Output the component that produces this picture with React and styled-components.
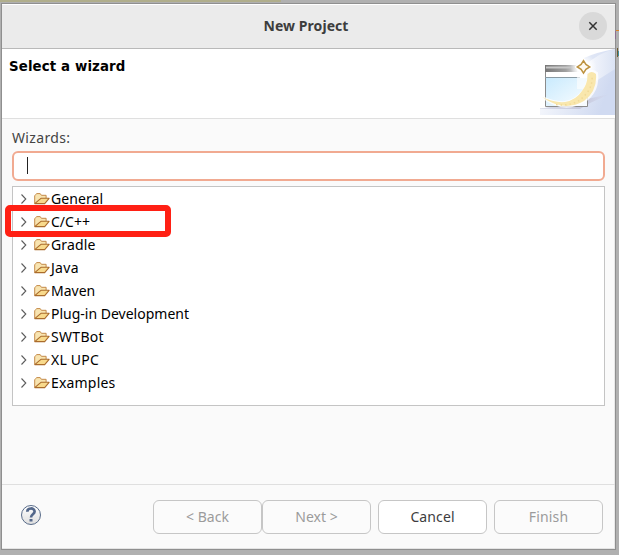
import React from "react";
import styled, { createGlobalStyle } from "styled-components";

const GlobalStyle = createGlobalStyle`
  * { box-sizing: border-box; }
  body { margin: 0; overflow: hidden; font-family: "Noto Sans", "Open Sans", sans-serif; }
`;

const Desktop = styled.div`
  position: relative;
  width: 619px;
  height: 555px;
  padding: 3px 3px 5px 1px;
  background: linear-gradient(#b0ae8c, #b0ae8c) 0 0 / 281px 2px no-repeat, #b0b0b0;
`;

const Dialog = styled.main`
  display: flex;
  flex-direction: column;
  width: 615px;
  height: 547px;
  border: 1px solid #8f8f8f;
  background: #fafafa;
  box-shadow: inset 0 -1px #e4e4e4, inset -1px 0 #e8e8e8;
`;

const TitleBar = styled.header`
  display: grid;
  grid-template-columns: 28px 1fr 28px;
  align-items: center;
  flex: 0 0 45px;
  padding: 0 8px 1px;
  border-top: 1px solid #fff;
  border-bottom: 1px solid #b9b9b9;
  background: #ebebeb;
`;

const Title = styled.h1`
  margin: 0;
  padding-right: 5px;
  text-align: center;
  color: #3d3d3d;
  font-size: 14px;
  font-weight: 700;
  line-height: 20px;
  letter-spacing: ${(p) => p.$tracking}px;
`;

const CloseButton = styled.button`
  display: grid;
  place-items: center;
  width: 28px;
  height: 28px;
  padding: 0;
  border: 0;
  border-radius: 50%;
  background: #d9d9d9;
`;

const Banner = styled.section`
  display: flex;
  justify-content: space-between;
  flex: 0 0 70px;
  padding-left: 7px;
  border-bottom: 1px solid #dfdfdf;
  background: #fff;
`;

const BannerTitle = styled.h2`
  margin: 9px 0 0;
  color: #000;
  font: 700 13.33px/18px "DejaVu Sans", sans-serif;
  letter-spacing: 0.13px;
`;

const Content = styled.section`
  display: flex;
  flex-direction: column;
  flex: 1;
  padding: 9px 9px 0 10px;
`;

const FieldLabel = styled.label`
  height: 23px;
  color: #444;
  font-size: 14px;
  line-height: 20px;
  letter-spacing: ${(p) => p.$tracking}px;
`;

const FilterField = styled.div`
  display: flex;
  align-items: center;
  flex: 0 0 30px;
  width: 593px;
  padding: 0 0 1px 13px;
  border: 2px solid #f1aa91;
  border-radius: 6px;
  background: #fff;
`;

const Caret = styled.span`
  width: 1px;
  height: 17px;
  background: #222;
`;

const Tree = styled.ul`
  width: 593px;
  height: 220px;
  margin: 5px 0 0;
  padding: 0;
  border: 1px solid #c4c4c4;
  background: #fff;
  list-style: none;
`;

const TreeRow = styled.li`
  display: flex;
  align-items: center;
  height: 23px;
  padding-left: 7px;
`;

const RowLabel = styled.span`
  margin-left: 1px;
  color: #000;
  font-size: 14px;
  line-height: 20px;
  letter-spacing: ${(p) => p.$tracking}px;
  white-space: nowrap;
`;

const Footer = styled.footer`
  display: flex;
  flex: 0 0 65px;
  justify-content: space-between;
  padding: 15px 12px 0 18px;
  border-top: 1px solid #dfdfdf;
`;

const Help = styled.div`
  padding-top: 4px;
`;

const ButtonRow = styled.div`
  display: flex;
  gap: 7px;
`;

const ButtonPair = styled.div`
  display: flex;
`;

const ActionButton = styled.button`
  width: 109px;
  height: 34px;
  padding: 0 0 1px;
  border: 1px solid #c6c6c6;
  border-radius: 6px;
  background: ${(p) => (p.disabled ? "#fbfbfb" : "#fff")};
  color: ${(p) => (p.disabled ? "#9b9b9b" : "#3d3d3d")};
  font: 14px/20px "Noto Sans", sans-serif;
  letter-spacing: ${(p) => p.$tracking}px;
`;

const Highlight = styled.div`
  position: absolute;
  left: 5px;
  top: 205px;
  width: 166px;
  height: 32px;
  border: 6px solid #ff2014;
  border-radius: 5px;
`;

const EdgeMark = styled.span`
  position: absolute;
  left: ${(p) => p.$left}px;
  top: ${(p) => p.$top}px;
  width: ${(p) => p.$width}px;
  height: ${(p) => p.$height}px;
  background: ${(p) => p.$color};
`;

const Chevron = () => (
  <svg width="8" height="12" viewBox="0 0 8 12" fill="none">
    <path d="M1.5 1.5 5.8 6 1.5 10.5" stroke="#5c5c5c" strokeWidth="1.1" />
  </svg>
);

const FolderSvg = styled.svg`
  margin-left: 6px;
`;

const Folder = () => (
  <FolderSvg width="16" height="12" viewBox="0 0 16 12">
    <path d="M.7 10.5V2.8L1.8 1.5 2.6.6h3.6l1.2 1.7h4.7v2.9" fill="#f8e4b0" stroke="#c48a4a" strokeLinejoin="round" />
    <path d="M.8 10.6 4.8 7.2 7 5.3h8.1l-4.4 5.3z" fill="#f8da8c" stroke="#ab6c2c" strokeWidth="1.1" strokeLinejoin="round" />
  </FolderSvg>
);

const CloseIcon = () => (
  <svg width="10" height="10" viewBox="0 0 10 10">
    <path d="m1.3 1.3 7.4 7.4m0-7.4-7.4 7.4" stroke="#333" strokeWidth="1.5" />
  </svg>
);

const WizardArt = () => (
  <svg width="75" height="66" viewBox="0 0 75 66">
    <defs>
      <linearGradient id="sky" x2="1" y2=".3">
        <stop stopColor="#fff" />
        <stop offset="1" stopColor="#d0daf1" />
      </linearGradient>
      <linearGradient id="ray" x2="1">
        <stop stopColor="#fafbfe" />
        <stop offset="1" stopColor="#dbe3f4" />
      </linearGradient>
      <linearGradient id="shade" x2="1">
        <stop stopColor="#c6c8da" stopOpacity=".5" />
        <stop offset=".65" stopColor="#c6c8dc" />
        <stop offset="1" stopColor="#d3d9ee" stopOpacity=".3" />
      </linearGradient>
      <linearGradient id="pane" x2="1" y2="1">
        <stop stopColor="#c9eafd" />
        <stop offset="1" stopColor="#fafdff" />
      </linearGradient>
      <linearGradient id="bar" x2="1">
        <stop stopColor="#777" />
        <stop offset=".55" stopColor="#a0a0a0" />
        <stop offset="1" stopColor="#fff" />
      </linearGradient>
      <radialGradient id="glow">
        <stop offset=".35" stopColor="#fff" />
        <stop offset="1" stopColor="#fff" stopOpacity="0" />
      </radialGradient>
      <filter id="soft" x="-20%" y="-20%" width="140%" height="140%">
        <feGaussianBlur stdDeviation=".7" />
      </filter>
    </defs>
    <path d="M44 9Q57 3 75 0v66H0v-6l23-6 22-18z" fill="url(#sky)" />
    <path d="M44 17Q60 3 75 0v20L45 39z" fill="url(#ray)" />
    <path d="M0 59h5l42-9 23-5-20 9-10 6H0z" fill="url(#shade)" />
    <path d="M5.5 16.5h42v41h-42z" fill="#fff" stroke="#8b8b8b" />
    <path d="M5 16h38v7H5z" fill="url(#bar)" />
    <path d="M6 18.5h32" stroke="#c7c7c7" strokeWidth="2" />
    <path d="M6 29h41v28H6z" fill="url(#pane)" />
    <path d="M5 28.5h35" stroke="#899aa3" />
    <path d="M37 15h11v25H37z" fill="#fff" opacity=".6" filter="url(#soft)" />
    <circle cx="43.5" cy="18" r="13" fill="url(#glow)" />
    <path d="M2 48Q14 54 25 53 36 51 43 42 49 34 48 24q4-4 9 0 2 18-12 28Q24 65 2 48z" fill="#fff" opacity=".8" stroke="#fff" strokeWidth="2" filter="url(#soft)" />
    <path d="M2 48Q14 54 25 53 36 51 42 42 48 34 47.5 25q4-4 8.500 0 1.500 17-12 27Q24 63.500 2 48z" fill="#f9e7ad" filter="url(#soft)" />
    <path d="M16 55.500Q36 58 46 45 53 37 52 26" fill="none" stroke="#f1d996" strokeWidth="1.500" strokeDasharray="1.500 3" />
    <path d="M43.500 11.500 49.700 17.900 43.500 24.300 37.300 17.900z" fill="#fffdf4" stroke="#fff" strokeWidth="4" />
    <path d="M43.500 11.700 45.900 15.500 49.700 17.900 45.900 20.300 43.500 24.100 41.100 20.300 37.300 17.900 41.100 15.500z" fill="#fffaf0" stroke="#bd923f" strokeWidth="1.500" />
  </svg>
);

const BannerArt = styled.div`
  width: 75px;
  height: 66px;
`;

const HelpIcon = () => (
  <svg width="22" height="22" viewBox="0 0 22 22">
    <defs>
      <linearGradient id="help" x2="0" y2="1">
        <stop stopColor="#fff" />
        <stop offset="1" stopColor="#dedede" />
      </linearGradient>
    </defs>
    <circle cx="11" cy="11" r="9.500" fill="url(#help)" stroke="#586b89" />
    <path d="M7.300 7.800C7.300 3.400 14.600 3.400 14.600 7.600 14.600 10.400 11 10.200 11 13.500" fill="none" stroke="#53678a" strokeWidth="2.700" />
    <path d="M9.500 15h3v2.500h-3z" fill="#53678a" />
  </svg>
);

const wizards = [
  ["General", 0.07],
  ["C/C++", 0],
  ["Gradle", 0.15],
  ["Java", 0.3],
  ["Maven", 0],
  ["Plug-in Development", 0],
  ["SWTBot", 0.3],
  ["XL UPC", 0.2],
  ["Examples", 0.18],
];

export default function App() {
  return (
    <Desktop>
      <GlobalStyle />
      <Dialog>
        <TitleBar>
          <span />
          <Title $tracking={0.06}>New Project</Title>
          <CloseButton aria-label="Close"><CloseIcon /></CloseButton>
        </TitleBar>
        <Banner>
          <BannerTitle>Select a wizard</BannerTitle>
          <BannerArt><WizardArt /></BannerArt>
        </Banner>
        <Content>
          <FieldLabel $tracking={0.35}>Wizards:</FieldLabel>
          <FilterField><Caret /></FilterField>
          <Tree>
            {wizards.map(([name, tracking]) => (
              <TreeRow key={name}>
                <Chevron />
                <Folder />
                <RowLabel $tracking={tracking}>{name}</RowLabel>
              </TreeRow>
            ))}
          </Tree>
        </Content>
        <Footer>
          <Help><HelpIcon /></Help>
          <ButtonRow>
            <ButtonPair>
              <ActionButton disabled $tracking={0}>&lt; Back</ActionButton>
              <ActionButton disabled $tracking={0}>Next &gt;</ActionButton>
            </ButtonPair>
            <ActionButton $tracking={0.1}>Cancel</ActionButton>
            <ActionButton disabled $tracking={0.15}>Finish</ActionButton>
          </ButtonRow>
        </Footer>
      </Dialog>
      <Highlight />
      <EdgeMark $left={616} $top={30} $width={3} $height={1} $color="#d9822b" />
      <EdgeMark $left={615} $top={31} $width={1} $height={8} $color="#8d6f90" />
      <EdgeMark $left={617} $top={48} $width={1} $height={9} $color="#6b5a30" />
      <EdgeMark $left={618} $top={51} $width={1} $height={5} $color="#3f8fa0" />
    </Desktop>
  );
}
